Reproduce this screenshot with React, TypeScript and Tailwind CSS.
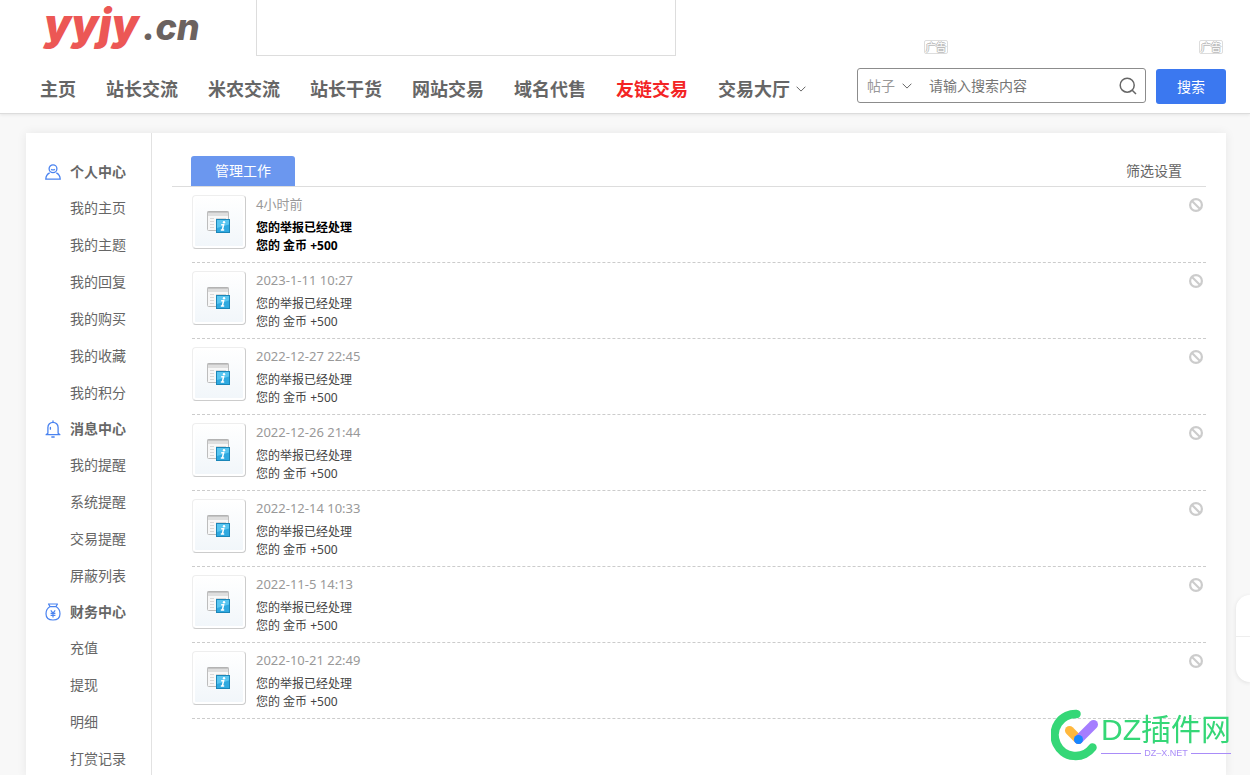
import React from "react";

type NavItem = { label: string; active?: boolean; menu?: boolean };

const NAV: NavItem[] = [
  { label: "主页" },
  { label: "站长交流" },
  { label: "米农交流" },
  { label: "站长干货" },
  { label: "网站交易" },
  { label: "域名代售" },
  { label: "友链交易", active: true },
  { label: "交易大厅", menu: true },
];

const GROUPS = [
  {
    title: "个人中心",
    icon: <UserIcon />,
    items: ["我的主页", "我的主题", "我的回复", "我的购买", "我的收藏", "我的积分"],
  },
  {
    title: "消息中心",
    icon: <BellIcon />,
    items: ["我的提醒", "系统提醒", "交易提醒", "屏蔽列表"],
  },
  {
    title: "财务中心",
    icon: <PurseIcon />,
    items: ["充值", "提现", "明细", "打赏记录"],
  },
];

const NOTICES = [
  { time: "4小时前", unread: true },
  { time: "2023-1-11 10:27" },
  { time: "2022-12-27 22:45" },
  { time: "2022-12-26 21:44" },
  { time: "2022-12-14 10:33" },
  { time: "2022-11-5 14:13" },
  { time: "2022-10-21 22:49" },
];

function Chevron() {
  return (
    <svg width="10" height="6" viewBox="0 0 10 6" fill="none" stroke="#666" strokeWidth="1" aria-hidden="true">
      <path d="M0.6 0.7 5 5.1 9.4 0.7" />
    </svg>
  );
}

function UserIcon() {
  return (
    <svg width="16" height="16" viewBox="0 0 16 16" fill="none" stroke="#4a83f0" strokeWidth="1.3" aria-hidden="true">
      <circle cx="8" cy="4.7" r="3.9" />
      <path d="M6.2 5.2c.9 1 2.7 1 3.6 0" />
      <path d="M4.7 8.8C2.4 9.8.9 12 .8 15.2h14.4c-.1-3.2-1.6-5.4-3.9-6.4" />
    </svg>
  );
}

function BellIcon() {
  return (
    <svg width="16" height="18" viewBox="0 0 16 18" fill="none" stroke="#4a83f0" strokeWidth="1.3" strokeLinecap="round" aria-hidden="true">
      <path d="M8 .9v1.2M2.9 13.2V7.4a5.1 5.1 0 0 1 10.2 0v5.8l1.8 1.5H1.1zM5.4 7.4v1.8" strokeLinejoin="round" />
      <path d="M6.8 17h2.4" />
    </svg>
  );
}

function PurseIcon() {
  return (
    <svg width="16" height="18" viewBox="0 0 16 18" fill="none" stroke="#4a83f0" strokeWidth="1.2" strokeLinejoin="round" aria-hidden="true">
      <path d="M3.5 1h9l-1.6 2.6H5.1zM5.1 3.6C2.6 5 1 7.5 1 10.7c0 4 2.9 6.3 7 6.3s7-2.3 7-6.3c0-3.2-1.6-5.7-4.1-7.1" />
      <path d="m5.8 7.4 2.2 2.8 2.2-2.8M8 10.2v4.2M5.6 10.4h4.8M5.6 12.4h4.8" />
    </svg>
  );
}

function NoticeIcon() {
  return (
    <svg width="24" height="23" viewBox="0 0 24 23" aria-hidden="true">
      <rect x=".5" y=".5" width="21" height="19" rx="1" fill="#f7f7f7" stroke="#bdbdbd" />
      <path d="M1 1h20v4H1z" fill="#dedede" />
      <path d="M.5 1h21" stroke="#a9a9a9" />
      <path d="M3 7.5h4M3 10.5h4M3 13.5h4M3 16.5h4M9 7.5h10" stroke="#d8d8d8" />
      <rect x="9.5" y="8.5" width="13" height="13" fill="#2fa9e0" stroke="#1b86b8" />
      <path d="M10 9h12v4.5L10 17z" fill="#58c5f0" />
      <circle cx="17" cy="11.2" r="1.2" fill="#fff" />
      <path d="M14.2 13.8h2.4l-1.2 5M13.8 19h3.4" fill="none" stroke="#fff" strokeWidth="1.5" />
    </svg>
  );
}

function BanIcon() {
  return (
    <svg width="14" height="14" viewBox="0 0 14 14" fill="none" stroke="#ccc" strokeWidth="2.2" aria-hidden="true">
      <circle cx="7" cy="7" r="5.9" />
      <path d="m3 3 8 8" />
    </svg>
  );
}

function AdBadge() {
  return (
    <span className="flex h-[14px] w-6 items-center justify-center rounded-xs border border-[#ddd] text-[10px] leading-none text-white [text-shadow:1px_0_0_#bbb,-1px_0_0_#bbb,0_1px_0_#bbb,0_-1px_0_#bbb]">
      广告
    </span>
  );
}

function Header() {
  return (
    <header className="h-[114px] border-b border-[#dcdcdc] bg-white pr-6 pl-10 shadow-[0_1px_3px_rgba(0,0,0,0.08)]">
      <div className="flex h-14">
        <a
          href="#"
          className="flex w-[216px] shrink-0 items-baseline gap-1 pl-1 font-[Inter,sans-serif] leading-[38px] italic"
        >
          <span className="text-[43px] font-black text-[#ec5755]">yyjy</span>
          <span className="pt-2 text-[36px] font-extrabold text-[#6b625f]">.cn</span>
        </a>
        <div className="w-[420px] shrink-0 border border-t-0 border-[#ddd]" />
        <div className="flex flex-1 items-end justify-end gap-[251px] pr-[3px] pb-[2px]">
          <AdBadge />
          <AdBadge />
        </div>
      </div>
      <div className="flex items-center justify-between pt-3">
        <nav className="flex gap-[30px] pt-[6px] text-lg leading-7 font-bold text-[#666]">
          {NAV.map((item) => (
            <a
              key={item.label}
              href="#"
              className={
                item.active
                  ? "whitespace-nowrap text-[#f32424]"
                  : "flex items-center gap-[6px] whitespace-nowrap"
              }
            >
              {item.label}
              {item.menu && <Chevron />}
            </a>
          ))}
        </nav>
        <form className="flex gap-[10px] text-sm" onSubmit={(e) => e.preventDefault()}>
          <div className="flex h-[35px] w-[289px] items-center rounded-[3px] border border-[#8c8c8c] pr-2 pl-[9px]">
            <select aria-label="搜索范围" className="h-7 w-[35px] appearance-none text-[#999] outline-none">
              <option>帖子</option>
            </select>
            <Chevron />
            <input
              aria-label="搜索内容"
              placeholder="请输入搜索内容"
              className="ml-[17px] min-w-0 flex-1 text-[#666] outline-none placeholder:text-[#757575]"
            />
            <svg width="18" height="18" viewBox="0 0 18 18" fill="none" stroke="#666" strokeWidth="1.5" aria-hidden="true">
              <circle cx="8.2" cy="8.2" r="7" />
              <path d="m13.2 13.2 3.8 3.8" />
            </svg>
          </div>
          <button type="submit" className="mt-px h-[35px] w-[70px] rounded-[3px] bg-[#3b78f0] text-white">
            搜索
          </button>
        </form>
      </div>
    </header>
  );
}

function Sidebar() {
  return (
    <aside className="w-[126px] shrink-0 border-r border-[#e2e2e2] pt-[21px] text-sm text-[#666]">
      {GROUPS.map((group) => (
        <section key={group.title}>
          <h2 className="flex h-[35px] items-center gap-[9px] pl-[19px] font-bold">
            {group.icon}
            {group.title}
          </h2>
          <ul>
            {group.items.map((item) => (
              <li key={item} className="pl-11 leading-[37px]">
                <a href="#">{item}</a>
              </li>
            ))}
          </ul>
        </section>
      ))}
    </aside>
  );
}

function Notices() {
  return (
    <section className="flex-1 px-5 pt-[23px]">
      <div className="flex items-center justify-between border-b border-[#ddd] pr-6 pl-[19px] text-sm">
        <button type="button" className="h-[30px] w-[104px] rounded-t-[3px] bg-[#6b97ef] text-white">
          管理工作
        </button>
        <a href="#" className="text-[#666]">
          筛选设置
        </a>
      </div>
      <ul className="pl-5 text-xs">
        {NOTICES.map((notice) => (
          <li key={notice.time} className="flex h-[76px] border-b border-dashed border-[#ccc] pt-2">
            <span className="flex h-[54px] w-[54px] items-center justify-center rounded-[4px] border border-[#eee] border-r-[#ccc] border-b-[#ccc] bg-linear-to-b from-white to-[#f1f6fa] shadow-[inset_0_0_0_2px_#fff]">
              <NoticeIcon />
            </span>
            <div className="ml-[10px] flex-1">
              <time className="block h-6 text-[13px] leading-[18px] text-[#999]">{notice.time}</time>
              <p className={notice.unread ? "leading-[18px] font-bold text-black" : "leading-[18px] text-[#444]"}>
                您的举报已经处理
                <br />
                您的 金币 +500
              </p>
            </div>
            <button type="button" aria-label="屏蔽" className="mt-[3px] mr-[3px] h-[14px]">
              <BanIcon />
            </button>
          </li>
        ))}
      </ul>
    </section>
  );
}

function Brand() {
  return (
    <a href="#" className="fixed right-[19px] bottom-[14px] flex items-center gap-[2px]">
      <svg width="48" height="52" viewBox="0 0 48 52" fill="none" strokeLinecap="round" aria-hidden="true">
        <path d="M25.5 5A21 21 0 1 0 41.5 38.5" stroke="#35d777" strokeWidth="8.5" />
        <path d="m18.5 21.5 9 9" stroke="#ffb83d" strokeWidth="9" />
        <path d="M27.5 30.5 42.5 15.5" stroke="#a57dff" strokeWidth="9" />
        <circle cx="27.5" cy="30.5" r="4.5" fill="#1687ff" />
      </svg>
      <span className="flex flex-col">
        <span className="font-['Liberation_Sans','Noto_Sans_CJK_SC',sans-serif] text-[30px] leading-9 whitespace-nowrap text-[#35d777]">
          DZ插件网
        </span>
        <span className="flex items-center gap-[3px] font-['Liberation_Sans',sans-serif] text-[9px] leading-[10px] text-[#a98cf8]">
          <span className="h-px flex-1 bg-[#a98cf8]" />
          DZ–X.NET
          <span className="h-px flex-1 bg-[#a98cf8]" />
        </span>
      </span>
    </a>
  );
}

export default function App() {
  return (
    <div className="min-h-screen bg-[#f8f8f8] font-['Noto_Sans','Noto_Sans_CJK_SC',sans-serif]">
      <Header />
      <main className="mt-[19px] mr-6 ml-[26px] flex bg-white shadow-[0_0_10px_rgba(0,0,0,0.07)]">
        <Sidebar />
        <Notices />
      </main>
      <div className="fixed right-0 bottom-[93px] h-[87px] w-[14px] overflow-hidden rounded-l-[20px] bg-white shadow-[0_1px_4px_rgba(0,0,0,0.1)]">
        <div className="h-[42px] border-b border-[#eee]" />
      </div>
      <Brand />
    </div>
  );
}
